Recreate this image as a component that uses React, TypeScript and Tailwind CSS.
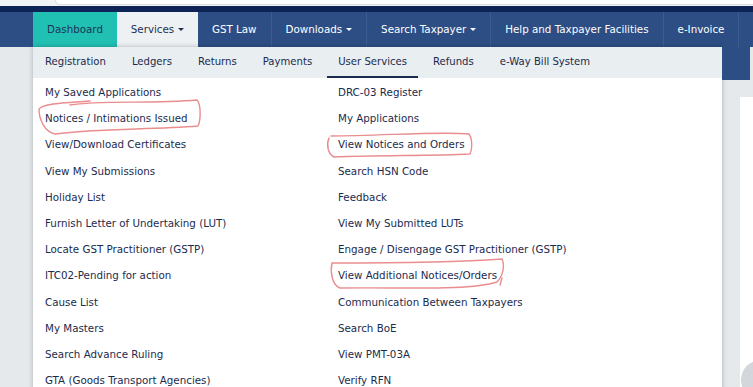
import React from "react";

const topNav = [
  { label: "Dashboard", caret: false, active: "teal" },
  { label: "Services", caret: true, active: "light" },
  { label: "GST Law", caret: false, active: "" },
  { label: "Downloads", caret: true, active: "" },
  { label: "Search Taxpayer", caret: true, active: "" },
  { label: "Help and Taxpayer Facilities", caret: false, active: "" },
  { label: "e-Invoice", caret: false, active: "" },
];

const subNav = ["Registration", "Ledgers", "Returns", "Payments", "User Services", "Refunds", "e-Way Bill System"];

const leftLinks = [
  "My Saved Applications",
  "Notices / Intimations Issued",
  "View/Download Certificates",
  "View My Submissions",
  "Holiday List",
  "Furnish Letter of Undertaking (LUT)",
  "Locate GST Practitioner (GSTP)",
  "ITC02-Pending for action",
  "Cause List",
  "My Masters",
  "Search Advance Ruling",
  "GTA (Goods Transport Agencies)",
];

const rightLinks = [
  "DRC-03 Register",
  "My Applications",
  "View Notices and Orders",
  "Search HSN Code",
  "Feedback",
  "View My Submitted LUTs",
  "Engage / Disengage GST Practitioner (GSTP)",
  "View Additional Notices/Orders",
  "Communication Between Taxpayers",
  "Search BoE",
  "View PMT-03A",
  "Verify RFN",
];

const Caret = ({ dark }: { dark?: boolean }) => (
  <span
    className={`inline-block ml-[4px] mb-[1px] border-l-[3px] border-r-[3px] border-t-[3px] border-l-transparent border-r-transparent ${
      dark ? "border-t-[#1d2f52]" : "border-t-white"
    }`}
  />
);

export default function App() {
  return (
    <div
      className="relative w-[753px] h-[387px] overflow-hidden bg-[#e6e9ec]"
      style={{ fontFamily: '"DejaVu Sans", Verdana, sans-serif' }}
    >
      {/* top strip */}
      <div className="h-[6px] bg-[#f1f3f5] flex">
        <div className="ml-[55px] w-[700px] h-[5px] bg-white rounded-bl-[6px] border-b border-l border-[#d9dde2]" />
      </div>
      <div className="h-[6px] bg-[#0f2456]" />

      {/* main nav */}
      <div className="h-[35px] bg-[#2c4e85] flex pl-[33px] text-[10.3px] whitespace-nowrap">
        {topNav.map((item) => (
          <div
            key={item.label}
            className={`shrink-0 flex items-center px-[14px] border-r border-[#3b5c91] ${
              item.active === "teal"
                ? "bg-[#20c0b2] text-[#1d3357] w-[84px] justify-center border-r-0"
                : item.active === "light"
                ? "bg-[#eef1f3] text-[#1d2f52] w-[81px] justify-center border-r-0"
                : "text-white"
            }`}
          >
            {item.label}
            {item.caret && <Caret dark={item.active === "light"} />}
          </div>
        ))}
      </div>

      {/* body */}
      <div className="flex">
        <div className="w-[33px] shrink-0" />
        <div className="w-[689px] shrink-0 bg-white shadow-[0_0_5px_rgba(0,0,0,0.25)] text-[#1b2b4e]">
          <div className="h-[31px] bg-[#e9eef0] flex gap-[4px] pl-[1px] text-[10.1px] whitespace-nowrap">
            {subNav.map((s) => (
              <div
                key={s}
                className={`flex items-center pt-[1px] px-[11px] border-b-2 ${
                  s === "User Services" ? "border-[#1b2b4e]" : "border-transparent"
                }`}
              >
                {s}
              </div>
            ))}
          </div>
          <div className="grid grid-cols-[293px_1fr] pl-[12px] pt-[1px] text-[10.3px] leading-[26.2px]">
            <div>
              {leftLinks.map((l) => (
                <div key={l}>{l}</div>
              ))}
            </div>
            <div>
              {rightLinks.map((l) => (
                <div key={l}>{l}</div>
              ))}
            </div>
          </div>
        </div>
        <div className="flex-1 flex flex-col">
          <div className="h-[33px] w-[28px] bg-[#2c4e85]" />
          <div className="flex flex-1 pt-[17px] pl-[18px]">
            <div className="w-[13px] bg-white h-[300px]" />
          </div>
        </div>
      </div>

      {/* scroll button peeking */}
      <div className="absolute left-[741px] top-[360px] w-[40px] h-[40px] rounded-full bg-[#d3d6da]" />

      {/* red hand-drawn marks */}
      <svg className="absolute left-0 top-0 pointer-events-none" width="753" height="387" fill="none">
        <g stroke="#e98d8f" strokeWidth="1.4" strokeLinecap="round" strokeLinejoin="round">
          <path d="M 70 105 C 100 100, 150 104, 197 100 C 201 104, 201 120, 198 126 C 150 130, 100 128, 55 134 C 45 132, 39 120, 39 109 C 42 104, 60 103, 90 101" />
          <path d="M 331 136 C 380 136, 440 131, 469 134 C 473 140, 472 150, 470 154 C 430 156, 380 155, 334 157 C 328 154, 326 145, 329 138" />
          <path d="M 332 263 C 380 263, 460 262, 502 259 C 505 266, 503 276, 497 282 C 470 291, 400 287, 340 288 C 332 285, 330 272, 332 263" />
          <path d="M 502 278 L 500 285" />
        </g>
      </svg>
    </div>
  );
}
